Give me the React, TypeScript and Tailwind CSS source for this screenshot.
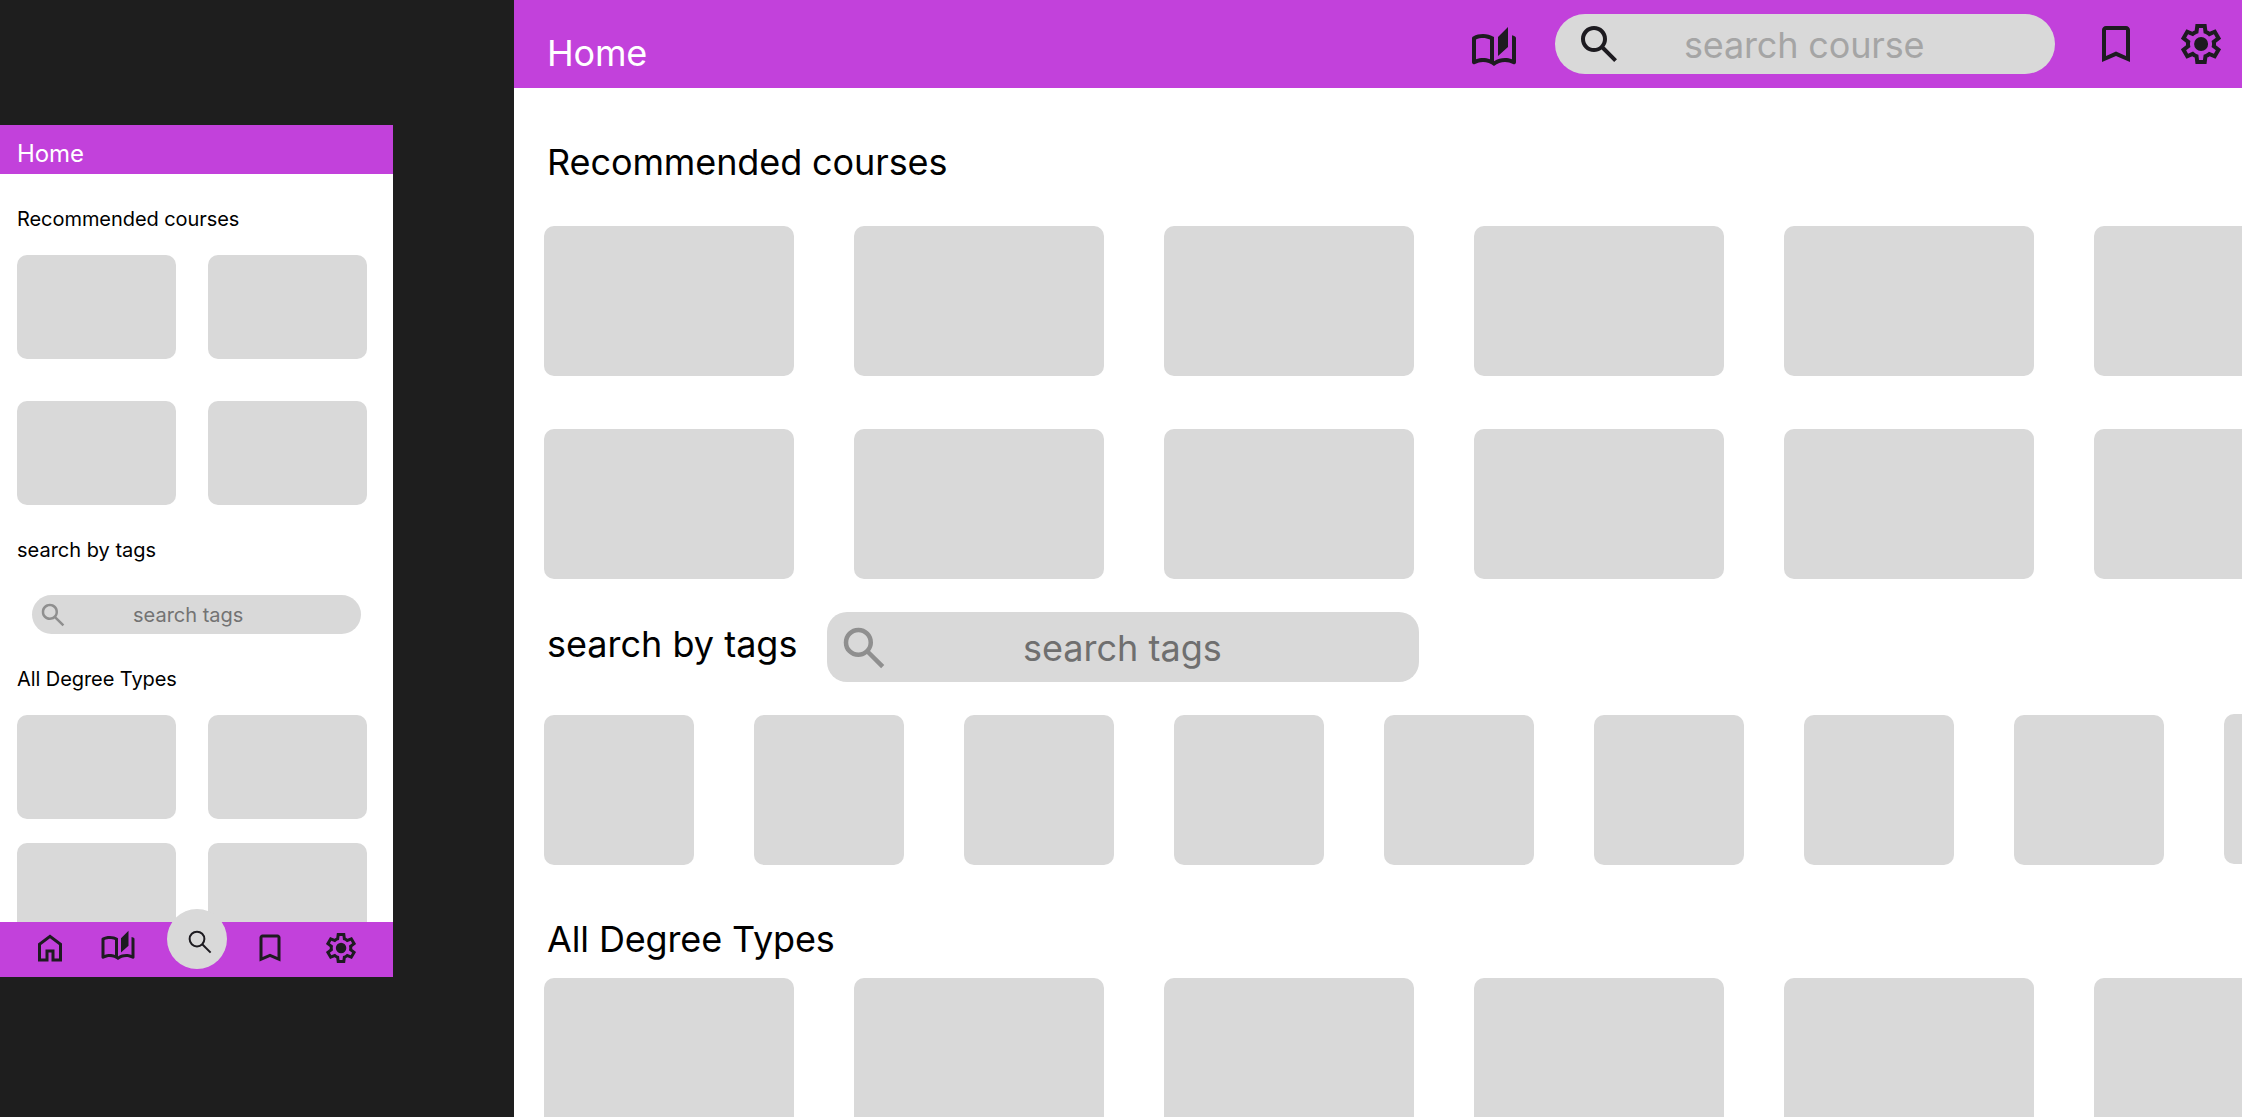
import React from "react";

type IconProps = { className?: string };

const icon = (d: string) =>
  function Icon({ className = "" }: IconProps) {
    return (
      <svg viewBox="0 0 24 24" fill="currentColor" fillRule="evenodd" className={`shrink-0 ${className}`} aria-hidden="true">
        <path d={d} />
      </svg>
    );
  };

const HomeIcon = icon("M6 19H9V13H15V19H18V10L12 5.5L6 10V19ZM4 21V9L12 3L20 9V21H13V15H11V21H4Z");
const BookIcon = icon(
  "M12 20C11.2 19.3667 10.3333 18.875 9.4 18.525C8.46667 18.175 7.5 18 6.5 18C5.8 18 5.1125 18.0917 4.4375 18.275C3.7625 18.4583 3.11667 18.7167 2.5 19.05C2.15 19.2333 1.8125 19.225 1.4875 19.025C1.1625 18.825 1 18.5333 1 18.15V6.1C1 5.91667 1.04583 5.74167 1.1375 5.575C1.22917 5.40833 1.36667 5.28333 1.55 5.2C2.31667 4.8 3.11667 4.5 3.95 4.3C4.78333 4.1 5.63333 4 6.5 4C7.46667 4 8.4125 4.125 9.3375 4.375C10.2625 4.625 11.15 5 12 5.5V17.6C12.85 17.0667 13.7417 16.6667 14.675 16.4C15.6083 16.1333 16.55 16 17.5 16C18.1 16 18.6875 16.05 19.2625 16.15C19.8375 16.25 20.4167 16.4 21 16.6V4.6C21.25 4.68333 21.4958 4.77083 21.7375 4.8625C21.9792 4.95417 22.2167 5.06667 22.45 5.2C22.6333 5.28333 22.7708 5.40833 22.8625 5.575C22.9542 5.74167 23 5.91667 23 6.1V18.15C23 18.5333 22.8375 18.825 22.5125 19.025C22.1875 19.225 21.85 19.2333 21.5 19.05C20.8833 18.7167 20.2375 18.4583 19.5625 18.275C18.8875 18.0917 18.2 18 17.5 18C16.5 18 15.5333 18.175 14.6 18.525C13.6667 18.875 12.8 19.3667 12 20ZM14 15V5.5L19 0.5V10.5L14 15ZM10 16.625V6.725C9.45 6.49167 8.87917 6.3125 8.2875 6.1875C7.69583 6.0625 7.1 6 6.5 6C5.88333 6 5.28333 6.05833 4.7 6.175C4.11667 6.29167 3.55 6.46667 3 6.7V16.625C3.58333 16.4083 4.1625 16.25 4.7375 16.15C5.3125 16.05 5.9 16 6.5 16C7.1 16 7.6875 16.05 8.2625 16.15C8.8375 16.25 9.41667 16.4083 10 16.625Z"
);
const SearchIcon = icon(
  "M19.6 21L13.3 14.7C12.8 15.1 12.225 15.4167 11.575 15.65C10.925 15.8833 10.2333 16 9.5 16C7.68333 16 6.14583 15.3708 4.8875 14.1125C3.62917 12.8542 3 11.3167 3 9.5C3 7.68333 3.62917 6.14583 4.8875 4.8875C6.14583 3.62917 7.68333 3 9.5 3C11.3167 3 12.8542 3.62917 14.1125 4.8875C15.3708 6.14583 16 7.68333 16 9.5C16 10.2333 15.8833 10.925 15.65 11.575C15.4167 12.225 15.1 12.8 14.7 13.3L21 19.6L19.6 21ZM9.5 14C10.75 14 11.8125 13.5625 12.6875 12.6875C13.5625 11.8125 14 10.75 14 9.5C14 8.25 13.5625 7.1875 12.6875 6.3125C11.8125 5.4375 10.75 5 9.5 5C8.25 5 7.1875 5.4375 6.3125 6.3125C5.4375 7.1875 5 8.25 5 9.5C5 10.75 5.4375 11.8125 6.3125 12.6875C7.1875 13.5625 8.25 14 9.5 14Z"
);
const BookmarkIcon = icon(
  "M5 21V5C5 4.45 5.19583 3.97917 5.5875 3.5875C5.97917 3.19583 6.45 3 7 3H17C17.55 3 18.0208 3.19583 18.4125 3.5875C18.8042 3.97917 19 4.45 19 5V21L12 18L5 21ZM7 17.95L12 15.8L17 17.95V5H7V17.95Z"
);
const GearIcon = icon(
  "M9.25 22L8.85 18.8C8.63333 18.7167 8.42917 18.6167 8.2375 18.5C8.04583 18.3833 7.85833 18.2583 7.675 18.125L4.7 19.375L1.95 14.625L4.525 12.675C4.50833 12.5583 4.5 12.4458 4.5 12.3375V11.6625C4.5 11.5542 4.50833 11.4417 4.525 11.325L1.95 9.375L4.7 4.625L7.675 5.875C7.85833 5.74167 8.05 5.61667 8.25 5.5C8.45 5.38333 8.65 5.28333 8.85 5.2L9.25 2H14.75L15.15 5.2C15.3667 5.28333 15.5708 5.38333 15.7625 5.5C15.9542 5.61667 16.1417 5.74167 16.325 5.875L19.3 4.625L22.05 9.375L19.475 11.325C19.4917 11.4417 19.5 11.5542 19.5 11.6625V12.3375C19.5 12.4458 19.4833 12.5583 19.45 12.675L22.025 14.625L19.275 19.375L16.325 18.125C16.1417 18.2583 15.95 18.3833 15.75 18.5C15.55 18.6167 15.35 18.7167 15.15 18.8L14.75 22H9.25ZM11 20H12.975L13.325 17.35C13.8417 17.2167 14.3208 17.0208 14.7625 16.7625C15.2042 16.5042 15.6083 16.1917 15.975 15.825L18.45 16.85L19.425 15.15L17.275 13.525C17.3583 13.2917 17.4167 13.0458 17.45 12.7875C17.4833 12.5292 17.5 12.2667 17.5 12C17.5 11.7333 17.4833 11.4708 17.45 11.2125C17.4167 10.9542 17.3583 10.7083 17.275 10.475L19.425 8.85L18.45 7.15L15.975 8.2C15.6083 7.81667 15.2042 7.49583 14.7625 7.2375C14.3208 6.97917 13.8417 6.78333 13.325 6.65L13 4H11.025L10.675 6.65C10.1583 6.78333 9.67917 6.97917 9.2375 7.2375C8.79583 7.49583 8.39167 7.80833 8.025 8.175L5.55 7.15L4.575 8.85L6.725 10.45C6.64167 10.7 6.58333 10.95 6.55 11.2C6.51667 11.45 6.5 11.7167 6.5 12C6.5 12.2667 6.51667 12.525 6.55 12.775C6.58333 13.025 6.64167 13.275 6.725 13.525L4.575 15.15L5.55 16.85L8.025 15.8C8.39167 16.1833 8.79583 16.5042 9.2375 16.7625C9.67917 17.0208 10.1583 17.2167 10.675 17.35L11 20ZM12.05 15.5A3.5 3.5 0 1 0 12.05 8.5A3.5 3.5 0 1 0 12.05 15.5Z"
);

/* Lighter-weight magnifier used on the phone's floating button. */
function ThinSearchIcon({ className = "" }: IconProps) {
  return (
    <svg viewBox="0 0 48 48" fill="none" stroke="currentColor" strokeWidth="3.2" className={`shrink-0 ${className}`} aria-hidden="true">
      <circle cx="19.2" cy="19.2" r="11.8" />
      <path d="M27.6 27.6L41 41" />
    </svg>
  );
}

function MobileCards() {
  return (
    <div className="flex gap-8 pl-[17px]">
      <div className="h-[104px] w-[159px] rounded-[10px] bg-[#d9d9d9]" />
      <div className="h-[104px] w-[159px] rounded-[10px] bg-[#d9d9d9]" />
    </div>
  );
}

function WideCards() {
  return (
    <div className="flex gap-[60px] pl-[30px]">
      {Array.from({ length: 6 }, (_, i) => (
        <div key={i} className="h-[150px] w-[250px] shrink-0 rounded-[10px] bg-[#d9d9d9]" />
      ))}
    </div>
  );
}

function MobileScreen() {
  return (
    <section className="mt-[125px] flex h-[852px] w-[393px] flex-col bg-white text-xl leading-6">
      <header className="h-[49px] shrink-0 bg-[#c241db] pt-[14px] pl-[17px]">
        <h1 className="text-2xl leading-[29px] tracking-[-0.1px] text-white">Home</h1>
      </header>
      <main className="h-[748px] overflow-hidden pt-[33px]">
        <h2 className="mb-6 pl-[17px] tracking-[-0.06px]">Recommended courses</h2>
        <div className="flex flex-col gap-[42px]">
          <MobileCards />
          <MobileCards />
        </div>
        <h2 className="mt-[33px] pl-[17px]">search by tags</h2>
        <div className="mt-[33px] ml-8 flex h-[39px] w-[329px] rounded-full bg-[#d9d9d9] pt-[5px] pl-[5.5px]">
          <SearchIcon className="size-[30px] text-[#8f8f8f]" />
          <span className="mt-[3px] ml-[65.5px] text-[#737373]">search tags</span>
        </div>
        <h2 className="mt-[33px] mb-6 pl-[17px] tracking-[-0.07px]">All Degree Types</h2>
        <div className="flex flex-col gap-6">
          <MobileCards />
          <MobileCards />
        </div>
      </main>
      <nav className="flex h-[55px] shrink-0 bg-[#c241db] text-[#1d1b20]">
        <HomeIcon className="mt-2 ml-8 size-9" />
        <BookIcon className="mt-2 ml-8 size-9" />
        <button className="-mt-[13px] ml-[31px] flex size-[60px] shrink-0 rounded-full bg-[#d9d9d9] pt-[18px] pl-[18px]">
          <ThinSearchIcon className="size-[30px]" />
        </button>
        <BookmarkIcon className="mt-2 ml-[25px] size-9" />
        <GearIcon className="mt-2 ml-[35px] size-9" />
      </nav>
    </section>
  );
}

function DesktopScreen() {
  return (
    <section className="h-full w-[1728px] shrink-0 overflow-hidden bg-white text-4xl leading-[44px]">
      <header className="flex h-[88px] bg-[#c241db] text-[#1d1b20]">
        <h1 className="mt-[31px] w-[923px] pl-[33px] leading-[44px] tracking-[-0.2px] text-white">Home</h1>
        <BookIcon className="mt-[26px] ml-[33px] size-12" />
        <div className="mt-[14px] ml-[37px] flex h-[60px] w-[500px] rounded-full bg-[#d9d9d9] pt-1.5 pl-5">
          <SearchIcon className="size-12" />
          <span className="mt-[3px] ml-[61px] tracking-[-0.16px] text-[#a5a5a5]">search course</span>
        </div>
        <BookmarkIcon className="mt-5 ml-[37px] size-12" />
        <GearIcon className="mt-5 ml-[37px] size-12" />
      </header>
      <main className="pt-[52px]">
        <h2 className="mb-[42px] pl-[33px] tracking-[-0.1px]">Recommended courses</h2>
        <div className="flex flex-col gap-[53px]">
          <WideCards />
          <WideCards />
        </div>
        <div className="mt-[33px] flex h-[70px]">
          <h2 className="mt-[10px] w-[313px] pl-[33px]">search by tags</h2>
          <div className="flex w-[592px] rounded-[20px] bg-[#d9d9d9] pt-[9px] pl-[10px]">
            <SearchIcon className="size-[54px] text-[#8f8f8f]" />
            <span className="mt-[5px] ml-[132px] text-[#6f6f6f]">search tags</span>
          </div>
        </div>
        <div className="mt-[33px] flex gap-[60px] pl-[30px]">
          {Array.from({ length: 9 }, (_, i) => (
            <div key={i} className="size-[150px] shrink-0 rounded-[10px] bg-[#d9d9d9] last:-mt-px" />
          ))}
        </div>
        <h2 className="mt-[52px] mb-[17px] pl-[33px] tracking-[-0.13px]">All Degree Types</h2>
        <WideCards />
      </main>
    </section>
  );
}

export default function App() {
  return (
    <div className="flex h-[1117px] w-[2242px] justify-between overflow-hidden bg-[#1e1e1e] font-['Inter',sans-serif] text-black">
      <MobileScreen />
      <DesktopScreen />
    </div>
  );
}
